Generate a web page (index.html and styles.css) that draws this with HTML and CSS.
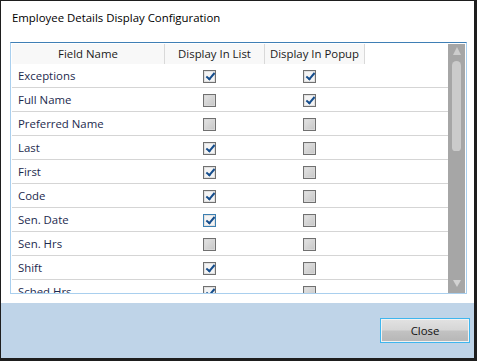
FILE: index.html
```html
<!DOCTYPE html>
<html>
<head>
<meta charset="utf-8">
<link rel="stylesheet" href="styles.css">
</head>
<body>
<div class="window">
  <div class="title">Employee Details Display Configuration</div>
  <div class="gridbox">
    <div class="list">
      <div class="header">
        <div class="hcell">Field Name</div>
        <div class="hcell">Display In List</div>
        <div class="hcell">Display In Popup</div>
        <div class="hfill"></div>
      </div>
      <div class="row"><div class="name">Exceptions</div><div class="cell"><span class="cb on"></span></div><div class="cell"><span class="cb on"></span></div></div>
      <div class="row"><div class="name">Full Name</div><div class="cell"><span class="cb"></span></div><div class="cell"><span class="cb on"></span></div></div>
      <div class="row"><div class="name">Preferred Name</div><div class="cell"><span class="cb"></span></div><div class="cell"><span class="cb"></span></div></div>
      <div class="row"><div class="name">Last</div><div class="cell"><span class="cb on"></span></div><div class="cell"><span class="cb"></span></div></div>
      <div class="row"><div class="name">First</div><div class="cell"><span class="cb on"></span></div><div class="cell"><span class="cb"></span></div></div>
      <div class="row"><div class="name">Code</div><div class="cell"><span class="cb on"></span></div><div class="cell"><span class="cb"></span></div></div>
      <div class="row"><div class="name">Sen. Date</div><div class="cell"><span class="cb on hover"></span></div><div class="cell"><span class="cb"></span></div></div>
      <div class="row"><div class="name">Sen. Hrs</div><div class="cell"><span class="cb"></span></div><div class="cell"><span class="cb"></span></div></div>
      <div class="row"><div class="name">Shift</div><div class="cell"><span class="cb on"></span></div><div class="cell"><span class="cb"></span></div></div>
      <div class="row"><div class="name">Sched Hrs</div><div class="cell"><span class="cb on"></span></div><div class="cell"><span class="cb"></span></div></div>
    </div>
    <div class="scrollbar">
      <div class="arrow up"></div>
      <div class="thumb"></div>
      <div class="track"></div>
      <div class="arrow down"></div>
    </div>
  </div>
  <div class="footer">
    <button class="btn">Close</button>
  </div>
</div>
</body>
</html>
```
FILE: styles.css
```css
html, body {
  margin: 0;
  padding: 0;
  background: #ffffff;
}
body {
  font-family: "Open Sans", "Noto Sans", sans-serif;
  font-size: 11.4px;
}
.window {
  width: 477px;
  height: 361px;
  box-sizing: border-box;
  border-style: solid;
  border-color: #1e1e1e;
  border-width: 1px 3px 3px 1px;
  background: #ffffff;
  display: flex;
  flex-direction: column;
}
.title {
  height: 41px;
  box-sizing: border-box;
  padding: 9px 0 0 11px;
  line-height: 16px;
  color: #000000;
}
.gridbox {
  margin-left: 9px;
  width: 457px;
  height: 252px;
  box-sizing: border-box;
  border: 1px solid #a9cfee;
  border-top-color: #3f7fb5;
  padding: 0 1px;
  display: flex;
  background: #ffffff;
}
.list {
  width: 436px;
  height: 250px;
  overflow: hidden;
}
.header {
  display: grid;
  grid-template-columns: 153px 100px 100px 1fr;
  height: 21px;
  box-sizing: border-box;
  border-bottom: 1px solid #d5d5d5;
}
.hcell {
  background: #f8f8f8;
  border-right: 1px solid #d9d9d9;
  text-align: center;
  line-height: 20px;
  color: #1a1a1a;
  margin-top: 1px;
}
.hfill {
  background: #ffffff;
}
.row {
  display: grid;
  grid-template-columns: 153px 100px 100px;
  height: 24px;
  box-sizing: border-box;
  border-bottom: 1px solid #d5d5d5;
  align-items: center;
}
.name {
  padding-left: 6px;
  color: #1c2a4e;
  line-height: 23px;
}
.cell {
  display: flex;
  align-items: center;
  height: 23px;
  padding-left: 38px;
}
.cb {
  width: 13px;
  height: 13px;
  box-sizing: border-box;
  border: 1px solid #707070;
  background: linear-gradient(135deg, #e4e4e4 0%, #c6c6c6 100%);
  box-shadow: inset 0 0 0 1px #d8d8d8;
  position: relative;
  margin-top: 1px;
}
.cb.on {
  background: #f4f4f4;
  box-shadow: inset 0 0 0 1px #e0e0e0;
}
.cb.on::after {
  content: "";
  position: absolute;
  left: 4px;
  top: 0px;
  width: 3px;
  height: 7px;
  border-right: 2px solid #154d8c;
  border-bottom: 2px solid #154d8c;
  transform: rotate(40deg);
}
.cb.hover {
  border-color: #3c7fb1;
}
.scrollbar {
  width: 17px;
  margin-top: 1px;
  height: 249px;
  background: #a6a6a6;
  display: flex;
  flex-direction: column;
  align-items: center;
}
.arrow {
  width: 0;
  height: 0;
  border-left: 4px solid transparent;
  border-right: 4px solid transparent;
}
.arrow.up {
  margin-top: 3px;
  border-bottom: 8px solid #cdcdcd;
}
.thumb {
  margin-top: 6px;
  width: 9px;
  height: 90px;
  border-radius: 5px 5px 4px 4px;
  background: #cbcbcb;
}
.track {
  flex: 1;
}
.arrow.down {
  margin-bottom: 6px;
  border-top: 7px solid #d2d2d2;
}
.footer {
  margin-top: 9px;
  flex: 1;
  background: #bfd4e8;
  display: flex;
  justify-content: flex-end;
  align-items: flex-start;
  padding: 15px 4px 0 0;
}
.btn {
  width: 90px;
  height: 25px;
  box-sizing: border-box;
  border: 1px solid #3fb6ee;
  box-shadow: inset 0 0 0 1px #f2f2f2;
  background: linear-gradient(#e2e2e2 0%, #d6d6d6 48%, #c2c2c2 52%, #b6b6b6 100%);
  font-family: "Open Sans", "Noto Sans", sans-serif;
  font-size: 11.4px;
  color: #111111;
  padding: 0;
  line-height: 22px;
}
```
